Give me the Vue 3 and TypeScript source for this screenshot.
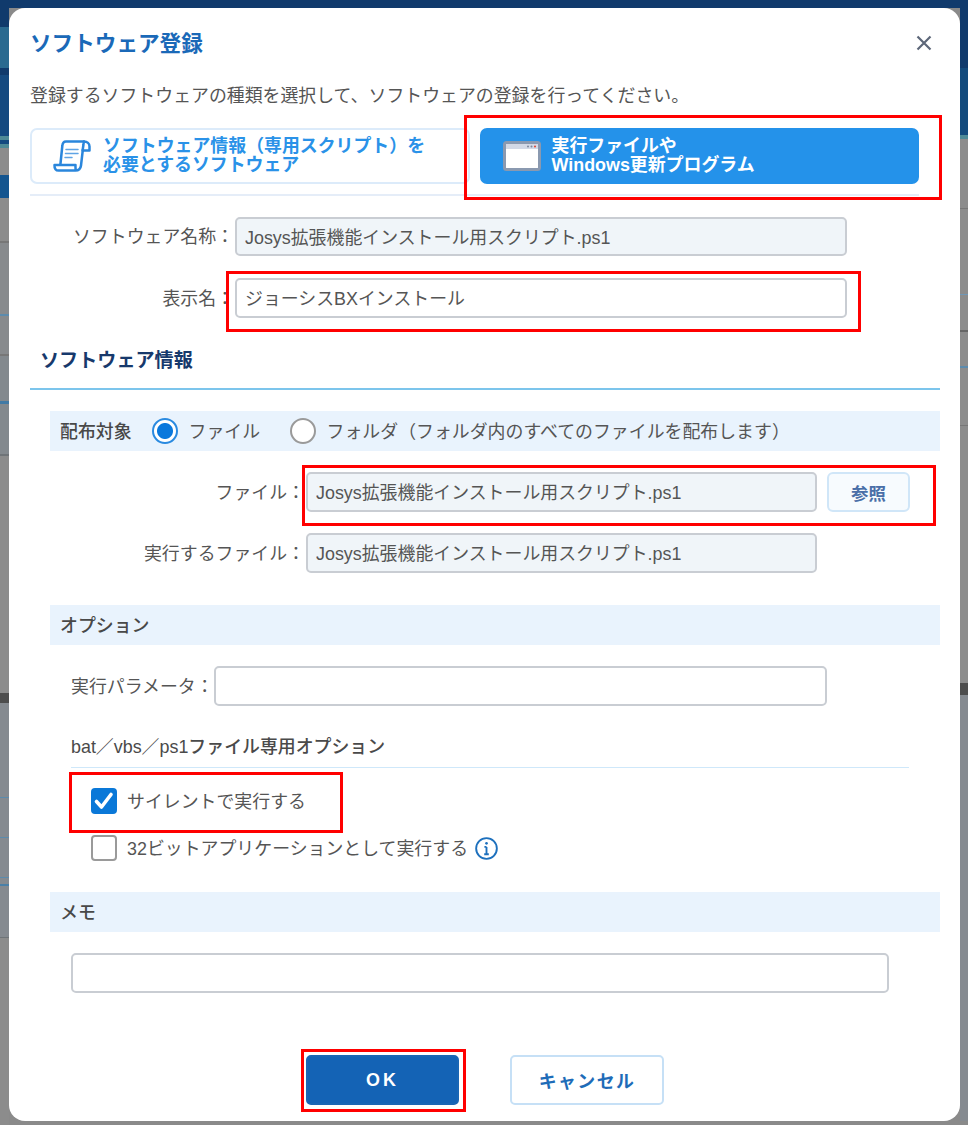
<template>
  <div class="page">
    <section class="modal">
      <header class="modal-head">
        <h1>ソフトウェア登録</h1>
        <button type="button" class="close" aria-label="閉じる">
          <svg viewBox="0 0 16 16" fill="none" stroke="currentColor" stroke-width="2.2">
            <path d="M1.5 1.5 14.5 14.5M14.5 1.5 1.5 14.5" />
          </svg>
        </button>
      </header>

      <p class="intro">登録するソフトウェアの種類を選択して、ソフトウェアの登録を行ってください。</p>

      <div class="type-row">
        <button type="button" class="type-btn">
          <svg class="scroll-icon" viewBox="0 0 38 32" fill="none" stroke="currentColor" stroke-width="2.5" stroke-linecap="round" stroke-linejoin="round">
            <path d="M31 1.5H13C10.5 1.5 9.5 3.5 9.3 6L7.4 24.5" />
            <path d="M31 1.5c3.2 0 5.5 2 5.5 5V10.5H29.6L30.4 5c.2-2 .6-3.5.6-3.5" />
            <path d="M29.8 10 28 25.5c-.4 3.2-2.4 5-5.5 5H5.5c-2.6 0-4.2-1.8-4-5.5H22.5c-.2 2.5.4 5.5 0 5.5" />
            <path d="M13 9.5H25M12.5 13.5H25M12 17.5H19" stroke-width="1.5" opacity=".75" />
          </svg>
          <span>ソフトウェア情報（専用スクリプト）を<br />必要とするソフトウェア</span>
        </button>
        <button type="button" class="type-btn active">
          <svg class="window-icon" viewBox="0 0 38 30">
            <rect x="1.5" y="1.5" width="35" height="27" rx="2" fill="#fff" stroke="#8a99b0" stroke-width="3" />
            <rect x="3" y="3" width="32" height="5" fill="#d3d9e6" />
            <circle cx="25" cy="5.5" r="1" fill="#7d879c" />
            <circle cx="28.5" cy="5.5" r="1" fill="#7d879c" />
            <circle cx="32" cy="5.5" r="1" fill="#e0402c" />
          </svg>
          <span>実行ファイルや<br />Windows更新プログラム</span>
        </button>
      </div>
      <div class="type-rule"></div>

      <div class="name-row first">
        <label>ソフトウェア名称：</label>
        <input class="field readonly" readonly :value="scriptName" />
      </div>
      <div class="name-row second">
        <label>表示名：</label>
        <input class="field" v-model="displayName" />
      </div>

      <h2 class="section-title">ソフトウェア情報</h2>

      <div class="band target">
        <strong>配布対象</strong>
        <span class="radio checked"></span>
        <span class="radio-text first-text">ファイル</span>
        <span class="radio"></span>
        <span class="radio-text">フォルダ（フォルダ内のすべてのファイルを配布します）</span>
      </div>

      <div class="file-row first">
        <label>ファイル：</label>
        <input class="field readonly" readonly :value="scriptName" />
        <button type="button" class="browse">参照</button>
      </div>
      <div class="file-row second">
        <label>実行するファイル：</label>
        <input class="field readonly" readonly :value="scriptName" />
      </div>

      <div class="band block"><strong>オプション</strong></div>

      <div class="param-row">
        <label>実行パラメータ：</label>
        <input class="field" />
      </div>

      <div class="sub-title"><span>bat／vbs／ps1</span><b>ファイル専用オプション</b></div>

      <div class="check-row silent">
        <span class="check checked">
          <svg viewBox="0 0 26 26" fill="none" stroke="#fff" stroke-width="3.6" stroke-linecap="round" stroke-linejoin="round">
            <path d="M5.5 13.5 10.5 19 20 6.5" />
          </svg>
        </span>
        <span class="check-text">サイレントで実行する</span>
      </div>
      <div class="check-row bit">
        <span class="check"></span>
        <span class="check-text">32ビットアプリケーションとして実行する</span>
        <svg class="info" viewBox="0 0 22 22" fill="none" stroke="#1d70bd">
          <circle cx="11" cy="11" r="9.9" stroke-width="1.8" />
          <path d="M11 9.5V16.5M8.8 16.5H13.2M9 9.5H11" stroke-width="1.8" />
          <circle cx="11" cy="6" r="1.3" fill="#1d70bd" stroke="none" />
        </svg>
      </div>

      <div class="band memo-band"><strong>メモ</strong></div>
      <input class="field memo" />

      <footer class="modal-foot">
        <button type="button" class="ok">OK</button>
        <button type="button" class="cancel">キャンセル</button>
      </footer>

      <!-- red callouts drawn on top of the screen capture -->
      <div
        v-for="(box, i) in callouts"
        :key="i"
        class="callout"
        :style="{ left: box.x + 'px', top: box.y + 'px', width: box.w + 'px', height: box.h + 'px' }"
      ></div>
    </section>
  </div>
</template>

<script setup lang="ts">
import { ref } from 'vue'

const scriptName = 'Josys拡張機能インストール用スクリプト.ps1'
const displayName = ref('ジョーシスBXインストール')

// page coordinates minus the modal origin (9, 8)
const callouts = [
  { x: 455, y: 107, w: 478, h: 85 },
  { x: 217, y: 263, w: 635, h: 61 },
  { x: 293, y: 457, w: 634, h: 61 },
  { x: 60, y: 764, w: 274, h: 61 },
  { x: 292, y: 1041, w: 165, h: 63 }
]
</script>

<style scoped>
.page {
  box-sizing: border-box;
  width: 968px;
  height: 1125px;
  padding: 8px 8px 4px 9px;
  overflow: hidden;
  font-family: "Liberation Sans", "Noto Sans CJK JP", sans-serif;
  font-size: 17.9px;
  color: #555;
  /* dimmed page behind the dialog, only its edges show */
  background:
    linear-gradient(#103a6c, #103a6c) left top / 100% 8px no-repeat,
    linear-gradient(
      to bottom,
      #103a6c 0 27px,
      #2a6a90 27px 68px,
      #103a6c 68px 75px,
      #154a80 75px 136px,
      #4f8a96 136px 140px,
      #154a80 140px 144px,
      #4f8a96 144px 148px,
      #8c8c8c 148px 175px,
      #14558f 175px 198px,
      #8c8c8c 198px 241px,
      #777 241px 243px,
      #878a8d 243px 314px,
      #5c8bad 314px 316px,
      #878a8d 316px 354px,
      #777 354px 356px,
      #83898e 356px 401px,
      #417aa5 401px 404px,
      #83898e 404px 454px,
      #6f7478 454px 456px,
      #8c8c8c 456px 693px,
      #4d4d4d 693px 703px,
      #858a90 703px 797px,
      #5c8bad 797px 798px,
      #858a90 798px 837px,
      #5c8bad 837px 838px,
      #858a90 838px 877px,
      #5c8bad 877px 878px,
      #858a90 878px 884px,
      #4a80a8 884px 886px,
      #858a90 886px 937px,
      #6f7478 937px 938px,
      #8c8c8c 938px
    ) left top / 9px 100% no-repeat,
    linear-gradient(
      to bottom,
      #103a6c 0 68px,
      #134a7c 68px 135px,
      #4f8a96 135px 139px,
      #8c8c8c 139px 208px,
      #777 208px 209px,
      #8c8c8c 209px 294px,
      #6f98b8 294px 295px,
      #8c8c8c 295px 330px,
      #666 330px 332px,
      #8c8c8c 332px 366px,
      #5c8bad 366px 368px,
      #8c8c8c 368px 425px,
      #777 425px 426px,
      #8c8c8c 426px 683px,
      #4d4d4d 683px 695px,
      #858a90 695px 1121px,
      #8a8a8a 1121px
    ) right top / 8px 100% no-repeat,
    #8a8a8a;
}
.modal {
  position: relative;
  box-sizing: border-box;
  width: 951px;
  height: 1113px;
  padding: 20px 20px 0 21px;
  background: #fff;
  border-radius: 16px;
}
.modal-head {
  display: flex;
  align-items: center;
  justify-content: space-between;
  height: 30px;
  padding-right: 8px;
}
.modal-head h1 {
  margin: -4px 0 0;
  font-size: 21.6px;
  font-weight: 700;
  color: #1a69b8;
}
.close {
  width: 16px;
  height: 16px;
  padding: 0;
  border: 0;
  background: none;
  color: #5d6779;
}
.close svg {
  display: block;
  width: 16px;
  height: 16px;
}
.intro {
  margin: 26px 0 0;
  line-height: 24px;
}
.type-row {
  display: flex;
  gap: 10px;
  margin-top: 20px;
  padding-right: 21px;
}
.type-btn {
  display: flex;
  flex: 1;
  align-items: center;
  box-sizing: border-box;
  height: 56px;
  padding: 0 0 0 21px;
  border: 2px solid #dcebfa;
  border-radius: 7px;
  background: #fff;
  color: #2a92e8;
  font: inherit;
  font-weight: 700;
  line-height: 19.5px;
  text-align: left;
}
.type-btn.active {
  border-color: #2492ea;
  background: #2492ea;
  color: #fff;
}
.scroll-icon {
  flex: none;
  width: 38px;
  height: 32px;
  margin-right: 12px;
  color: #2a86dc;
}
.window-icon {
  flex: none;
  width: 38px;
  height: 30px;
  margin-right: 11px;
}
.type-rule {
  height: 2px;
  margin: 10px 21px 0 0;
  background: #e5edf8;
}
.name-row,
.file-row,
.param-row {
  display: flex;
  align-items: center;
}
.name-row label,
.file-row label,
.param-row label {
  flex: none;
  padding-bottom: 3px;
}
.name-row label,
.file-row label {
  text-align: right;
}
.name-row label {
  width: 204px;
  margin-right: 1px;
}
.name-row.first {
  margin-top: 21px;
}
.name-row.second {
  margin-top: 22px;
}
.name-row .field {
  width: 612px;
}
.name-row.first .field {
  height: 39px;
}
.field {
  box-sizing: border-box;
  display: block;
  height: 40px;
  padding: 0 8px 2px;
  border: 2px solid #c9cdd3;
  border-radius: 5px;
  outline: none;
  background: #fff;
  color: #555;
  font: inherit;
}
.field.readonly {
  background: #f0f5f9;
}
.section-title {
  margin: 30px 0 0;
  padding: 0 0 14px 10px;
  border-bottom: 2px solid #7cc5ec;
  font-size: 19.1px;
  font-weight: 700;
  line-height: 26px;
  color: #17396c;
}
.band {
  display: flex;
  align-items: center;
  box-sizing: border-box;
  height: 40px;
  margin-left: 20px;
  padding-left: 10px;
  background: #e9f3fd;
}
.band strong {
  padding-bottom: 2px;
  font-weight: 500;
  color: #484848;
}
.band.target {
  margin-top: 21px;
}
.band.block {
  margin-top: 32px;
}
.band.memo-band {
  margin-top: 31px;
}
.radio {
  flex: none;
  box-sizing: border-box;
  width: 26px;
  height: 26px;
  border: 2px solid #9a9a9a;
  border-radius: 50%;
  background: #fff;
}
.band strong + .radio {
  margin-left: 20px;
}
.radio.checked {
  border-color: #2a8ae0;
  background: radial-gradient(circle, #0a78dc 0 7.5px, #fff 8.5px);
}
.radio-text {
  margin-left: 11px;
  padding-bottom: 2px;
}
.radio-text.first-text {
  width: 90px;
  margin-right: 11px;
}
.file-row label {
  width: 275px;
  margin-right: 1px;
}
.file-row .field {
  width: 511px;
}
.file-row.first {
  margin-top: 21px;
}
.file-row.second {
  margin-top: 21px;
}
.browse {
  box-sizing: border-box;
  width: 83px;
  height: 40px;
  margin-left: 10px;
  border: 2px solid #d0e6f8;
  border-radius: 6px;
  background: #f7fbfe;
  color: #4a6fa8;
  font: inherit;
  font-size: 17.4px;
  font-weight: 700;
}
.param-row {
  margin-top: 21px;
  padding-left: 41px;
}
.param-row label {
  width: 143px;
}
.param-row .field {
  width: 613px;
}
.sub-title {
  margin: 29px 31px 0 41px;
  padding-bottom: 8px;
  border-bottom: 1px solid #cfe8fa;
  line-height: 24px;
  color: #4a4a4a;
}
.sub-title b {
  font-weight: 500;
}
.check-row {
  display: flex;
  align-items: center;
  height: 26px;
  padding-left: 61px;
}
.check-row.silent {
  margin-top: 20px;
}
.check-row.bit {
  margin-top: 21px;
}
.check-text {
  padding-bottom: 3px;
}
.check {
  flex: none;
  box-sizing: border-box;
  width: 26px;
  height: 26px;
  margin-right: 10px;
  border: 2px solid #9a9a9a;
  border-radius: 4px;
  background: #fff;
}
.check.checked {
  border: 0;
  background: #0a78d8;
}
.check svg {
  display: block;
  width: 26px;
  height: 26px;
}
.info {
  flex: none;
  width: 23px;
  height: 23px;
  margin-left: 7px;
}
.memo {
  width: 818px;
  margin: 21px 0 0 41px;
}
.modal-foot {
  display: flex;
  justify-content: center;
  gap: 51px;
  margin-top: 62px;
}
.modal-foot button {
  box-sizing: border-box;
  height: 50px;
  border-radius: 5px;
  font: inherit;
  font-weight: 700;
}
.ok {
  width: 153px;
  border: 2px solid #1a66b4;
  background: #1463b5;
  color: #fff;
  letter-spacing: 3px;
}
.cancel {
  width: 154px;
  border: 2px solid #c6e0f6;
  background: #fff;
  color: #1e6cb8;
  letter-spacing: 1.4px;
}
.callout {
  position: absolute;
  box-sizing: border-box;
  border: 3px solid #f00;
  pointer-events: none;
}
</style>
